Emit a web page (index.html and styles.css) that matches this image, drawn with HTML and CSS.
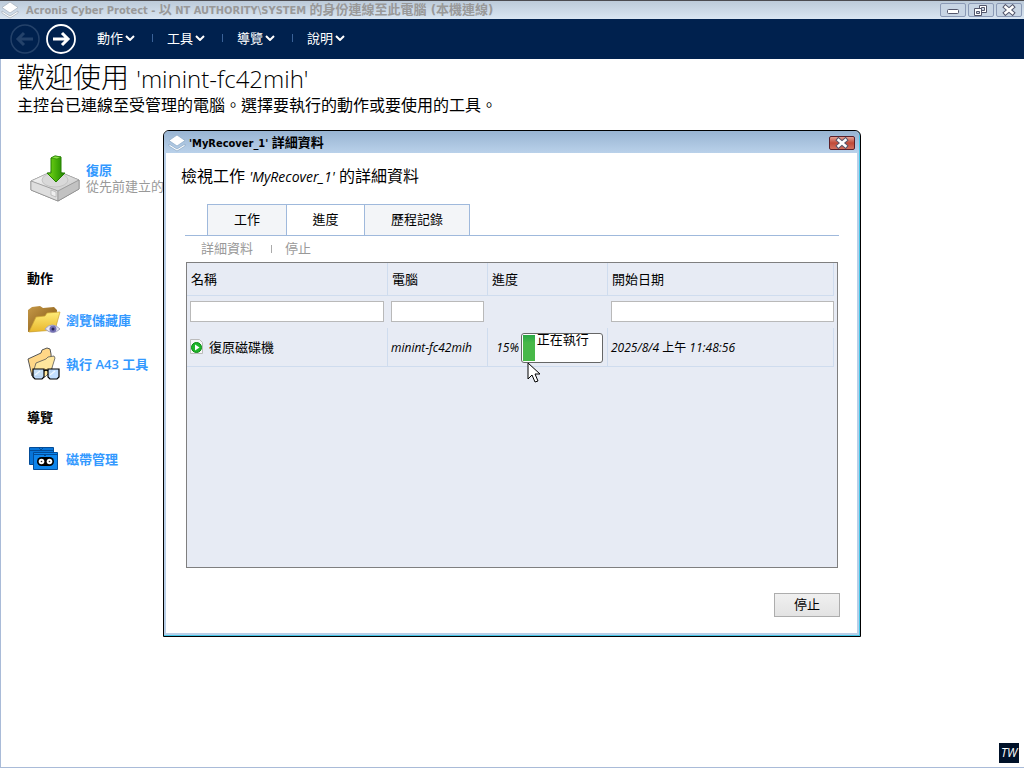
FILE: index.html
```html
<!DOCTYPE html>
<html lang="zh-Hant">
<head>
<meta charset="utf-8">
<title>Acronis Cyber Protect</title>
<link rel="stylesheet" href="styles.css">
</head>
<body>
<header class="titlebar">
	<svg class="logo" viewBox="0 0 18 18"><path d="M1 10l8 5 8-5v2l-8 5-8-5z" fill="#fff" stroke="#a4aeb9" stroke-width=".7"/><path d="M9 1l8 5.500-8 5.500-8-5.500z" fill="#fff" stroke="#a4aeb9" stroke-width=".7"/></svg>
	<span class="caption">Acronis Cyber Protect - <span>以</span> NT AUTHORITY\SYSTEM <span>的身份連線至此電腦 (本機連線)</span></span>
	<div class="winbuttons">
		<button aria-label="最小化"><svg viewBox="0 0 24 12"><rect x="6.500" y="5.500" width="11" height="4" rx="1" fill="#fff" stroke="#53566b"/></svg></button>
		<button aria-label="還原"><svg viewBox="0 0 24 12"><path d="M10.500 1.500h7v7h-7z" fill="#fff" stroke="#53566b"/><path d="M12.500 3.500h3v3h-3z" fill="#ccd6e4" stroke="#53566b"/><path d="M5.500 4.500h7v7h-7z" fill="#fff" stroke="#53566b"/><path d="M7.500 7.500h3v2h-3z" fill="#ccd6e4" stroke="#53566b"/></svg></button>
		<button aria-label="關閉"><svg viewBox="0 0 24 12"><path d="M8.500 3l7 6M15.500 3l-7 6" stroke="#53566b" stroke-width="4.500" stroke-linecap="square"/><path d="M8.500 3l7 6M15.500 3l-7 6" stroke="#fff" stroke-width="2.500" stroke-linecap="square"/></svg></button>
	</div>
</header>
<nav class="menubar">
	<button class="nav off" aria-label="上一頁"><svg viewBox="0 0 30 30"><circle cx="15" cy="15" r="14" stroke-width="1.500"/><path d="M23 15H8M14 9l-6 6 6 6" stroke-width="3"/></svg></button>
	<button class="nav" aria-label="下一頁"><svg viewBox="0 0 30 30"><circle cx="15" cy="15" r="14" stroke-width="1.800"/><path d="M7 15h15M16 9l6 6-6 6" stroke-width="3"/></svg></button>
	<div class="menus">
		<button>動作<svg viewBox="0 0 10 6"><path d="M1 1l4 4 4-4"/></svg></button>
		<button>工具<svg viewBox="0 0 10 6"><path d="M1 1l4 4 4-4"/></svg></button>
		<button>導覽<svg viewBox="0 0 10 6"><path d="M1 1l4 4 4-4"/></svg></button>
		<button>說明<svg viewBox="0 0 10 6"><path d="M1 1l4 4 4-4"/></svg></button>
	</div>
</nav>
<main class="console">
	<h1>歡迎使用 <span>'minint-fc42mih'</span></h1>
	<p class="intro">主控台已連線至受管理的電腦。選擇要執行的動作或要使用的工具。</p>
	<div class="side">
		<div class="recover">
			<svg viewBox="0 0 50 50">
				<defs>
					<linearGradient id="disk" x1="0" y1="0" x2="1" y2="1"><stop offset="0" stop-color="#fff"/><stop offset="1" stop-color="#c4c4c4"/></linearGradient>
					<linearGradient id="arrow" x1="0" x2="1"><stop offset="0" stop-color="#7ddb18"/><stop offset=".6" stop-color="#3fa807"/><stop offset="1" stop-color="#237c00"/></linearGradient>
				</defs>
				<path d="M1 26l24-11 24 10v9L28 46 1 35z" fill="#bbb" stroke="#888"/>
				<path d="M1 26l24-11 24 10-21 11z" fill="url(#disk)" stroke="#aaa" stroke-width=".6"/>
				<path d="M1 26l27 10v10L1 35z" fill="#dedede" stroke="#888" stroke-width=".6"/>
				<path d="M28 36l21-11v9L28 46z" fill="#c2c2c2" stroke="#888" stroke-width=".6"/>
				<ellipse cx="25" cy="25" rx="13" ry="7" fill="#d9d9d9" stroke="#c4c4c4"/>
				<path d="M21 35l5 2v5l-5-2z" fill="#eee" stroke="#999" stroke-width=".5"/>
				<path d="M21 3l4-2 6 1v16h4l-9 9-9-9h4z" fill="url(#arrow)" stroke="#238000"/>
				<path d="M21 3l6 1 4-2-6-1z" fill="#8be044" stroke="#238000" stroke-width=".6"/>
			</svg>
			<div><a href="#recover">復原</a><p>從先前建立的</p></div>
		</div>
		<h2>動作</h2>
		<ul>
			<li>
				<svg viewBox="0 0 34 32">
					<defs>
						<linearGradient id="brown" x1="0" x2="1" y1="0" y2="1"><stop offset="0" stop-color="#c79a48"/><stop offset="1" stop-color="#7c5010"/></linearGradient>
						<linearGradient id="yellow" x1="0" x2="0" y1="0" y2="1"><stop offset="0" stop-color="#ffec78"/><stop offset="1" stop-color="#e8b62c"/></linearGradient>
					</defs>
					<path d="M1 28V6l4-3 8-1 3 2 11-1 3 3-1 19z" fill="url(#brown)"/>
					<path d="M2 28l7-15 9-1 2-3 13-1-5 18z" fill="url(#yellow)" stroke="#cda434" stroke-width=".7"/>
					<path d="M18 25q7-8 15 0-7 7-15 0z" fill="#e9e9f4" stroke="#a3a3c2" stroke-width="1"/>
					<circle cx="26" cy="25" r="3.500" fill="#7470b4"/><circle cx="26" cy="25" r="1.500" fill="#262457"/>
				</svg>
				<a href="#vaults">瀏覽儲藏庫</a>
			</li>
			<li>
				<svg viewBox="0 0 34 34">
					<path d="M5 29L1 12l13-6 1-3 5-2 3 1 1 5 1 20z" fill="#ffd787" stroke="#555"/>
					<path d="M5 29l4-13 10-4 2-2 6-1 1 2-4 13-6 6z" fill="#ffe79e" stroke="#555" stroke-width=".8"/>
					<path d="M6 22h11v8l-2 2H8l-2-2zM21 22h11v8l-2 2h-7l-2-2z" fill="#bcdcff" fill-opacity=".9" stroke="#000" stroke-width="1.200"/>
					<path d="M17 24q2-2 4 0" fill="none" stroke="#000" stroke-width="1.200"/>
					<path d="M8 28l5-4M23 28l5-4" stroke="#eef7ff" stroke-width="1.500"/>
				</svg>
				<a href="#a43">執行 A43 工具</a>
			</li>
		</ul>
		<h2>導覽</h2>
		<ul>
			<li>
				<svg viewBox="0 0 34 34">
					<path d="M2.500 5.500h24v17h-24z" fill="#0875d8" stroke="#034c98"/>
					<path d="M2 8.500h25M12 6l2 2 2-2" fill="none" stroke="#034c98"/>
					<path d="M6.500 10.500h24v17h-24z" fill="#0d85ec" stroke="#034c98"/>
					<path d="M6 12.500h25M16 12l2 2 2-2" fill="none" stroke="#034c98"/>
					<rect x="10" y="15" width="17" height="9" rx="4.500" fill="#000"/>
					<g fill="#fff"><circle cx="14.500" cy="19.500" r="2.800"/><circle cx="22.500" cy="19.500" r="2.800"/></g>
					<g fill="#333"><circle cx="14.500" cy="19.500" r=".8"/><circle cx="22.500" cy="19.500" r=".8"/></g>
				</svg>
				<a href="#tape">磁帶管理</a>
			</li>
		</ul>
	</div>
	<span class="ime">TW</span>
</main>

<section class="dialog" role="dialog" aria-labelledby="dialog-caption">
	<div class="dialog-title">
		<svg class="logo" viewBox="0 0 18 18"><path d="M1 10l8 5 8-5v2l-8 5-8-5z" fill="#fff" stroke="#8aa7c4" stroke-width=".7"/><path d="M9 1l8 5.500-8 5.500-8-5.500z" fill="#fff" stroke="#8aa7c4" stroke-width=".7"/></svg>
		<span class="caption" id="dialog-caption">'MyRecover_1' <span>詳細資料</span></span>
		<button class="close" aria-label="關閉"><svg viewBox="0 0 24 12"><path d="M8.500 3l7 6M15.500 3l-7 6" stroke="#53566b" stroke-width="4.500" stroke-linecap="square"/><path d="M8.500 3l7 6M15.500 3l-7 6" stroke="#fff" stroke-width="2.500" stroke-linecap="square"/></svg></button>
	</div>
	<div class="dialog-body">
		<h3>檢視工作 <i>'MyRecover_1'</i> 的詳細資料</h3>
		<div class="tabs" role="tablist">
			<button role="tab">工作</button>
			<button role="tab" class="active" aria-selected="true">進度</button>
			<button role="tab" class="wide">歷程記錄</button>
		</div>
		<div class="tools">
			<button disabled>詳細資料</button>
			<button disabled>停止</button>
		</div>
		<div class="grid">
			<table>
				<colgroup><col class="c-name"><col class="c-host"><col class="c-prog"><col></colgroup>
				<thead>
					<tr><th>名稱</th><th>電腦</th><th>進度</th><th>開始日期</th></tr>
					<tr class="filter">
						<td><input type="text" aria-label="名稱"></td>
						<td><input type="text" aria-label="電腦"></td>
						<td></td>
						<td><input type="text" aria-label="開始日期"></td>
					</tr>
				</thead>
				<tbody>
					<tr>
						<td><div class="task"><svg viewBox="0 0 14 16"><path d="M.5.5h9l3 3v11H.500z" fill="#f6f6f6" stroke="#bbb"/><circle cx="6.500" cy="8.500" r="5" fill="#1fb528" stroke="#078a12"/><path d="M5 5.500l4.500 3-4.500 3z" fill="#fff"/></svg>復原磁碟機</div></td>
						<td><i>minint-fc42mih</i></td>
						<td><div class="progress"><i>15%</i><div class="bar"><span class="fill" style="width:15%"></span><span class="state">正在執行</span></div></div></td>
						<td><i>2025/8/4 上午 11:48:56</i></td>
					</tr>
				</tbody>
			</table>
		</div>
		<div class="actions"><button>停止</button></div>
	</div>
</section>
<svg class="cursor" viewBox="0 0 14 22"><path d="M1 1v16l4-4 3 7 3-1-3-7h5z" fill="#fff" stroke="#000"/></svg>
</body>
</html>
```
FILE: styles.css
```css
* {
	box-sizing: border-box;
}
body {
	margin: 0;
	min-height: 100vh;
	display: flex;
	flex-direction: column;
	background: #fff;
	color: #000;
	font: 13px/18px "Open Sans", "Noto Sans CJK TC", sans-serif;
	font-synthesis: none;
}
button {
	padding: 0;
	border: 0;
	background: none;
	color: inherit;
	font: inherit;
}
svg {
	display: block;
	flex: none;
}
h1, h2, h3, p, ul {
	margin: 0;
	padding: 0;
	font-weight: normal;
}
a {
	color: #3399ff;
	text-decoration: none;
	font-weight: 600;
}

/* main window */
.titlebar {
	height: 19px;
	display: flex;
	align-items: center;
	padding: 0 2px 0 1px;
	border-top: 1px solid #4b4b50;
	background: linear-gradient(#bccad9, #d9e5f2);
	color: #999;
}
.logo {
	width: 18px;
	height: 18px;
}
.caption {
	flex: 1;
	padding-left: 7px;
	font: bold 11px/18px "DejaVu Sans Condensed", "Noto Sans CJK TC", sans-serif;
	white-space: nowrap;
}
.caption span {
	font-size: 13px;
}
.winbuttons {
	display: flex;
	gap: 2px;
}
.winbuttons button {
	width: 26px;
	height: 14px;
	border: 1px solid #8b9ab6;
	border-radius: 2px;
	background: #c8d5e4;
}
.menubar {
	height: 40px;
	display: flex;
	align-items: center;
	padding-left: 10px;
	background: #00214e;
	color: #fff;
}
.nav {
	width: 30px;
	height: 30px;
	margin-right: 6px;
}
.nav svg {
	fill: none;
	stroke: #fff;
}
.nav.off svg {
	stroke: #24426a;
}
.menus {
	display: flex;
	padding-left: 15px;
}
.menus button {
	width: 70px;
	display: flex;
	align-items: center;
	gap: 2px;
	padding-bottom: 2px;
}
.menus svg {
	width: 10px;
	height: 6px;
	fill: none;
	stroke: #fff;
	stroke-width: 2;
}
.menus button:not(:last-child)::after {
	content: "";
	height: 8px;
	margin-left: 15px;
	border-left: 1px solid #3a6298;
}
.console {
	flex: 1;
	display: flex;
	flex-direction: column;
	padding-left: 16px;
	border: 1px solid #a9bbd8;
	border-top: 0;
	border-right: 0;
}
h1 {
	font-size: 28px;
	line-height: 36px;
	font-weight: 300;
}
h1 span {
	font-size: 24px;
	line-height: 24px;
}
.intro {
	font-size: 16px;
	line-height: 20px;
}
.side {
	padding: 40px 0 0 10px;
}
.recover {
	display: flex;
	gap: 6px;
	padding-left: 3px;
	margin-bottom: 64px;
}
.recover svg {
	width: 50px;
	height: 50px;
}
.recover div {
	padding-top: 7px;
	line-height: 16px;
}
.recover p {
	color: #999;
}
h2 {
	font-size: 13px;
	line-height: 18px;
	font-weight: bold;
}
.side ul {
	list-style: none;
	padding: 11px 0 22px;
}
.side li {
	height: 44px;
	display: flex;
	align-items: center;
	gap: 5px;
}
.side li svg {
	width: 34px;
	height: 34px;
}
.ime {
	align-self: flex-end;
	margin: auto 5px 4px 0;
	width: 20px;
	background: #001128;
	color: #fff;
	font-size: 12px;
	line-height: 20px;
	font-style: italic;
	text-align: center;
}

/* task details window */
.dialog {
	position: absolute;
	left: 163px;
	top: 130px;
	width: 698px;
	border: 1px solid #000;
	border-radius: 6px 6px 0 0;
	background: #b9cfe8;
	box-shadow: inset -1px -1px #45c7e8;
	padding: 0 3px 3px 2px;
}
.dialog-title {
	height: 22px;
	margin: 0 -2px 0 -2px;
	display: flex;
	align-items: center;
	padding: 2px 4px 0;
	border-radius: 5px 5px 0 0;
	background: linear-gradient(#98b4d2, #b9d1ea);
}
.dialog-title .caption {
	padding-left: 3px;
}
.close {
	width: 26px;
	height: 14px;
	border: 1px solid #5b1f28;
	border-radius: 2px;
	background: linear-gradient(#e5a093, #c04a38 50%, #d3705f);
}
.dialog-body {
	padding: 13px 17px 16px 15px;
	background: #fff;
}
h3 {
	font-size: 16px;
	line-height: 20px;
	font-weight: normal;
}
h3 i {
	font-size: 14px;
	line-height: 16px;
}
.tabs {
	display: flex;
	margin: 18px 1px 0 4px;
	padding-left: 22px;
	border-bottom: 1px solid #9fb9dc;
}
.tabs button {
	width: 80px;
	height: 31px;
	margin: 0 -1px 0 0;
	padding-bottom: 2px;
	border: 1px solid #9fb9dc;
	border-bottom: 0;
	background: #f3f5f8;
}
.tabs .active {
	width: 79px;
	margin-bottom: -1px;
	background: #fff;
}
.tabs .wide {
	width: 106px;
}
.tools {
	display: flex;
	padding: 3px 0 5px 20px;
	color: #999;
}
.tools button + button::before {
	content: "";
	display: inline-block;
	height: 8px;
	margin: 0 13px 0 18px;
	border-left: 1px solid #aaa;
}
.grid {
	height: 306px;
	margin: 0 2px 0 5px;
	border: 1px solid #7f7f7f;
	background: #e7ebf4;
	padding-right: 3px;
}
table {
	width: 100%;
	table-layout: fixed;
	border-collapse: separate;
	border-spacing: 0;
}
.c-name {
	width: 201px;
}
.c-host {
	width: 100px;
}
.c-prog {
	width: 120px;
}
th, td {
	padding: 0 0 0 3px;
	text-align: left;
	font-weight: normal;
	white-space: nowrap;
}
th {
	height: 33px;
	padding-left: 4px;
	border-right: 1px solid #cfdcee;
	border-bottom: 1px solid #cfdcee;
}
.filter td {
	height: 32px;
	padding-bottom: 1px;
}
.filter input {
	display: block;
	width: calc(100% - 4px);
	height: 21px;
	border: 1px solid #b9b9b9;
	background: #fff;
}
.filter td:last-child input {
	width: 100%;
}
tbody td {
	height: 39px;
	border-right: 1px solid #cfdcee;
	border-bottom: 1px solid #cfdcee;
}
td i {
	font-size: 12px;
}
.task {
	display: flex;
	align-items: center;
	gap: 5px;
}
.task svg {
	width: 14px;
	height: 16px;
}
.progress {
	display: flex;
	align-items: center;
	justify-content: flex-end;
	gap: 2px;
	padding: 1px 4px 0 0;
}
.bar {
	display: flex;
	width: 82px;
	height: 30px;
	padding: 1px;
	border: 1px solid #666;
	border-radius: 3px;
	background: #fff;
	overflow: hidden;
}
.fill {
	flex: none;
	background: linear-gradient(#28a745, #48b848 30%);
}
.state {
	padding-left: 2px;
	line-height: 8px;
}
.actions {
	display: flex;
	justify-content: flex-end;
	padding-top: 25px;
}
.actions button {
	width: 66px;
	height: 24px;
	padding-bottom: 2px;
	border: 1px solid #adadad;
	background: linear-gradient(#f0f0f0, #e3e3e3);
}
.cursor {
	position: absolute;
	left: 527px;
	top: 362px;
	width: 14px;
	height: 22px;
}
```
